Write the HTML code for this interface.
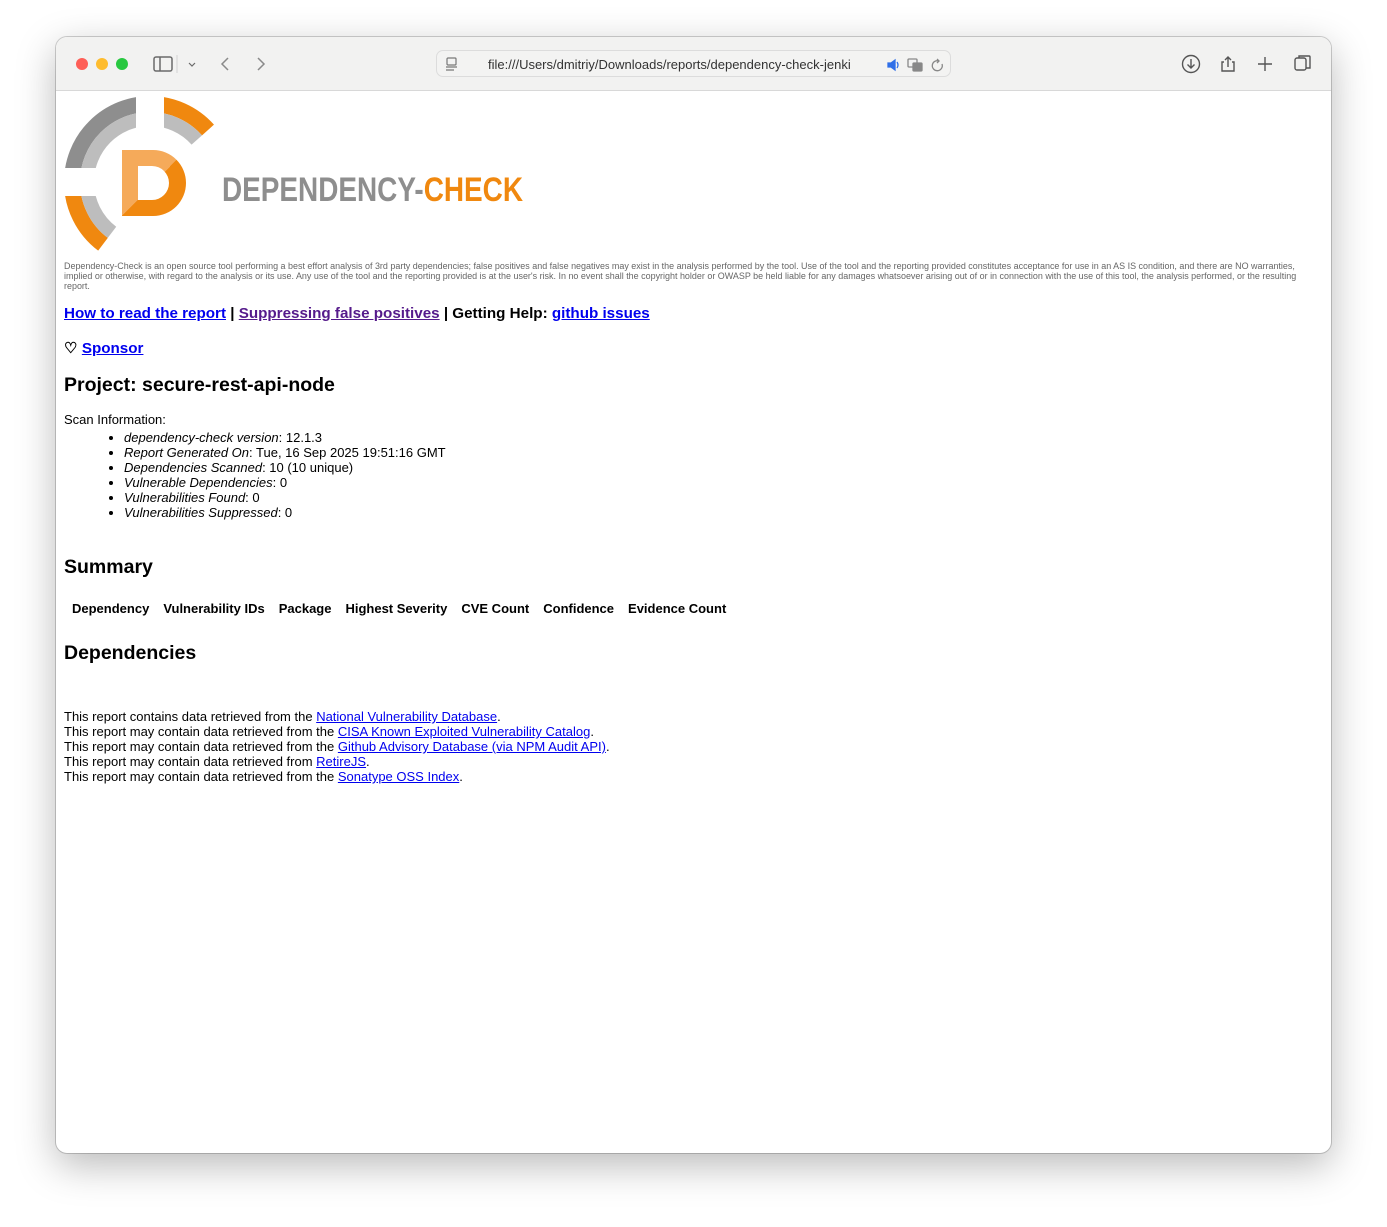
<!DOCTYPE html>
<html><head><meta charset="utf-8"><style>
*{margin:0;padding:0;box-sizing:border-box}
body{width:1387px;height:1227px;background:#fff;position:relative;overflow:hidden;font-family:"Liberation Sans",Arial,sans-serif;color:#000}
.win{position:absolute;left:56px;top:37px;width:1275px;height:1116px;border-radius:11px;background:#fff;box-shadow:0 12px 40px rgba(0,0,0,.28),0 0 0 1px rgba(0,0,0,.18);overflow:hidden}
.tb{position:absolute;left:0;top:0;width:100%;height:54px;background:#f2f2f1;border-bottom:1px solid #d8d8d8}
.dot{position:absolute;top:21px;width:12px;height:12px;border-radius:50%}
.url{position:absolute;left:380px;top:13px;width:515px;height:27px;border:1px solid #dcdcdc;border-radius:7px;background:#f3f3f2}
.url span{position:absolute;left:51px;top:6px;font-size:13px;color:#333;white-space:nowrap}
.a{position:absolute;white-space:nowrap}
a{color:#0000ee;text-decoration:underline}
a.v{color:#551a8b}
.disc{position:absolute;left:8px;top:224px;font-size:9px;line-height:10px;color:#666;white-space:nowrap;transform-origin:0 0;transform:scaleX(0.995)}
ul{list-style:disc}
.li{font-size:13px;line-height:15px}
</style></head><body>
<div class="win">
 <div class="tb">
  <div class="dot" style="left:20px;background:#fe5f57"></div>
  <div class="dot" style="left:40px;background:#febc2e"></div>
  <div class="dot" style="left:60px;background:#28c840"></div>
  <svg style="position:absolute;left:96px;top:17px" width="130" height="20" viewBox="0 0 130 20" fill="none" stroke="#6a6a6a" stroke-width="1.5">
   <rect x="2" y="3" width="18" height="14" rx="2"/><line x1="8" y1="3" x2="8" y2="17"/>
   <line x1="25" y1="1" x2="25" y2="19" stroke="#ddd"/>
   <path d="M37 9l3 3 3-3" stroke-width="1.2"/>
   <path d="M76 4l-6 6 6 6" stroke="#8a8a8a"/>
   <path d="M106 4l6 6-6 6" stroke="#8a8a8a"/>
  </svg>
  <div class="url"><svg style="position:absolute;left:8px;top:6px" width="14" height="14" fill="none" stroke="#777" stroke-width="1.2"><rect x="2" y="1" width="9" height="7" rx="1"/><line x1="1" y1="10" x2="12" y2="10"/><line x1="1" y1="13" x2="9" y2="13"/></svg>
   <span>file:///Users/dmitriy/Downloads/reports/dependency-check-jenki</span>
   <svg style="position:absolute;left:449px;top:6px" width="60" height="16" fill="none" stroke-width="1.3"><path d="M2 6h3l4-3v10l-4-3H2z" fill="#2f6fe8" stroke="#2f6fe8"/><path d="M11 5q2 3 0 6" stroke="#2f6fe8"/><rect x="22" y="2" width="9" height="8" rx="1" stroke="#888"/><rect x="27" y="6" width="9" height="8" rx="1" fill="#888" stroke="#888"/><path d="M53 4a5 5 0 1 0 3 3" stroke="#888"/><path d="M51 2l2 2-2 2" stroke="#888"/></svg>
  </div>
  <svg style="position:absolute;left:1122px;top:14px" width="140" height="26" fill="none" stroke="#555" stroke-width="1.4">
   <circle cx="13" cy="13" r="8.5"/><path d="M13 8v9M9.5 13.5l3.5 3.5 3.5-3.5"/>
   <path d="M47 9l3-3 3 3M50 6v10M46 11h-2v9h12v-9h-2"/>
   <path d="M87 6v14M80 13h14"/>
   <rect x="117" y="7" width="11" height="12" rx="2"/><path d="M121 7V5h10a1 1 0 0 1 1 1v11h-4"/>
  </svg>
 </div>
 <svg style="position:absolute;left:-56px;top:-37px" width="560" height="300">
  <defs>
   <clipPath id="c1"><rect x="0" y="0" width="136" height="168"/></clipPath>
   <clipPath id="c2"><rect x="164" y="0" width="200" height="168"/></clipPath>
   <clipPath id="c3"><rect x="0" y="196" width="136" height="100"/></clipPath>
   <linearGradient id="g" x1="0" y1="0" x2="1" y2="1"><stop offset="0.5" stop-color="#f5aa5a"/><stop offset="0.5" stop-color="#f0880f"/></linearGradient>
  </defs>
  <g clip-path="url(#c1)" fill="none">
   <path d="M72 182A78 78 0 0 1 150 104" stroke="#8e8e8e" stroke-width="16"/>
   <path d="M87 182A63 63 0 0 1 150 119" stroke="#bdbdbd" stroke-width="14"/>
  </g>
  <g clip-path="url(#c2)" fill="none">
   <path d="M150 104A78 78 0 0 1 208 130" stroke="#f0880f" stroke-width="16"/>
   <path d="M150 119A63 63 0 0 1 196.8 140" stroke="#bdbdbd" stroke-width="14"/>
  </g>
  <g clip-path="url(#c3)" fill="none">
   <path d="M103 244.3A78 78 0 0 1 72 182" stroke="#f0880f" stroke-width="16"/>
   <path d="M112 232.3A63 63 0 0 1 87 182" stroke="#bdbdbd" stroke-width="14"/>
  </g>
  <path fill-rule="evenodd" fill="url(#g)" d="M122 150H153A33 33 0 0 1 153 216H122Z M138 166H152A17 17 0 0 1 152 200H138Z"/>
  <text x="222" y="201" textLength="301" lengthAdjust="spacingAndGlyphs" font-family="Liberation Sans Narrow, Liberation Sans, sans-serif" font-weight="bold" font-size="34" fill="#8e8e8e">DEPENDENCY-<tspan fill="#f0880f">CHECK</tspan></text>
 </svg>
 <div class="disc">Dependency-Check is an open source tool performing a best effort analysis of 3rd party dependencies; false positives and false negatives may exist in the analysis performed by the tool. Use of the tool and the reporting provided constitutes acceptance for use in an AS IS condition, and there are NO warranties,<br>implied or otherwise, with regard to the analysis or its use. Any use of the tool and the reporting provided is at the user's risk. In no event shall the copyright holder or OWASP be held liable for any damages whatsoever arising out of or in connection with the use of this tool, the analysis performed, or the resulting<br>report.</div>
 <div class="a" style="left:8px;top:268px;font-size:15.2px;font-weight:bold"><a href="#">How to read the report</a> | <a class="v" href="#">Suppressing false positives</a> | Getting Help: <a href="#">github issues</a></div>
 <div class="a" style="left:8px;top:302px;font-size:15.2px;font-weight:bold">♡ <a href="#">Sponsor</a></div>
 <div class="a" style="left:8px;top:337px;font-size:19.5px;font-weight:bold">Project: secure-rest-api-node</div>
 <div class="a" style="left:8px;top:375px;font-size:13px">Scan Information:</div>
 <ul style="position:absolute;left:68px;top:393px">
  <li class="li"><i>dependency-check version</i>: 12.1.3</li>
  <li class="li"><i>Report Generated On</i>: Tue, 16 Sep 2025 19:51:16 GMT</li>
  <li class="li"><i>Dependencies Scanned</i>: 10 (10 unique)</li>
  <li class="li"><i>Vulnerable Dependencies</i>: 0</li>
  <li class="li"><i>Vulnerabilities Found</i>: 0</li>
  <li class="li"><i>Vulnerabilities Suppressed</i>: 0</li>
 </ul>
 <div class="a" style="left:8px;top:519px;font-size:19.5px;font-weight:bold">Summary</div>
 <div class="a" style="left:16px;top:564px;font-size:13px;font-weight:bold">Dependency<span style="margin-left:14px">Vulnerability IDs</span><span style="margin-left:14px">Package</span><span style="margin-left:14px">Highest Severity</span><span style="margin-left:14px">CVE Count</span><span style="margin-left:14px">Confidence</span><span style="margin-left:14px">Evidence Count</span></div>
 <div class="a" style="left:8px;top:605px;font-size:19.5px;font-weight:bold">Dependencies</div>
 <div class="a" style="left:8px;top:672px;font-size:13px;line-height:15px">
  This report contains data retrieved from the <a href="#">National Vulnerability Database</a>.<br>
  This report may contain data retrieved from the <a href="#">CISA Known Exploited Vulnerability Catalog</a>.<br>
  This report may contain data retrieved from the <a href="#">Github Advisory Database (via NPM Audit API)</a>.<br>
  This report may contain data retrieved from <a href="#">RetireJS</a>.<br>
  This report may contain data retrieved from the <a href="#">Sonatype OSS Index</a>.
 </div>
</div>
</body></html>
